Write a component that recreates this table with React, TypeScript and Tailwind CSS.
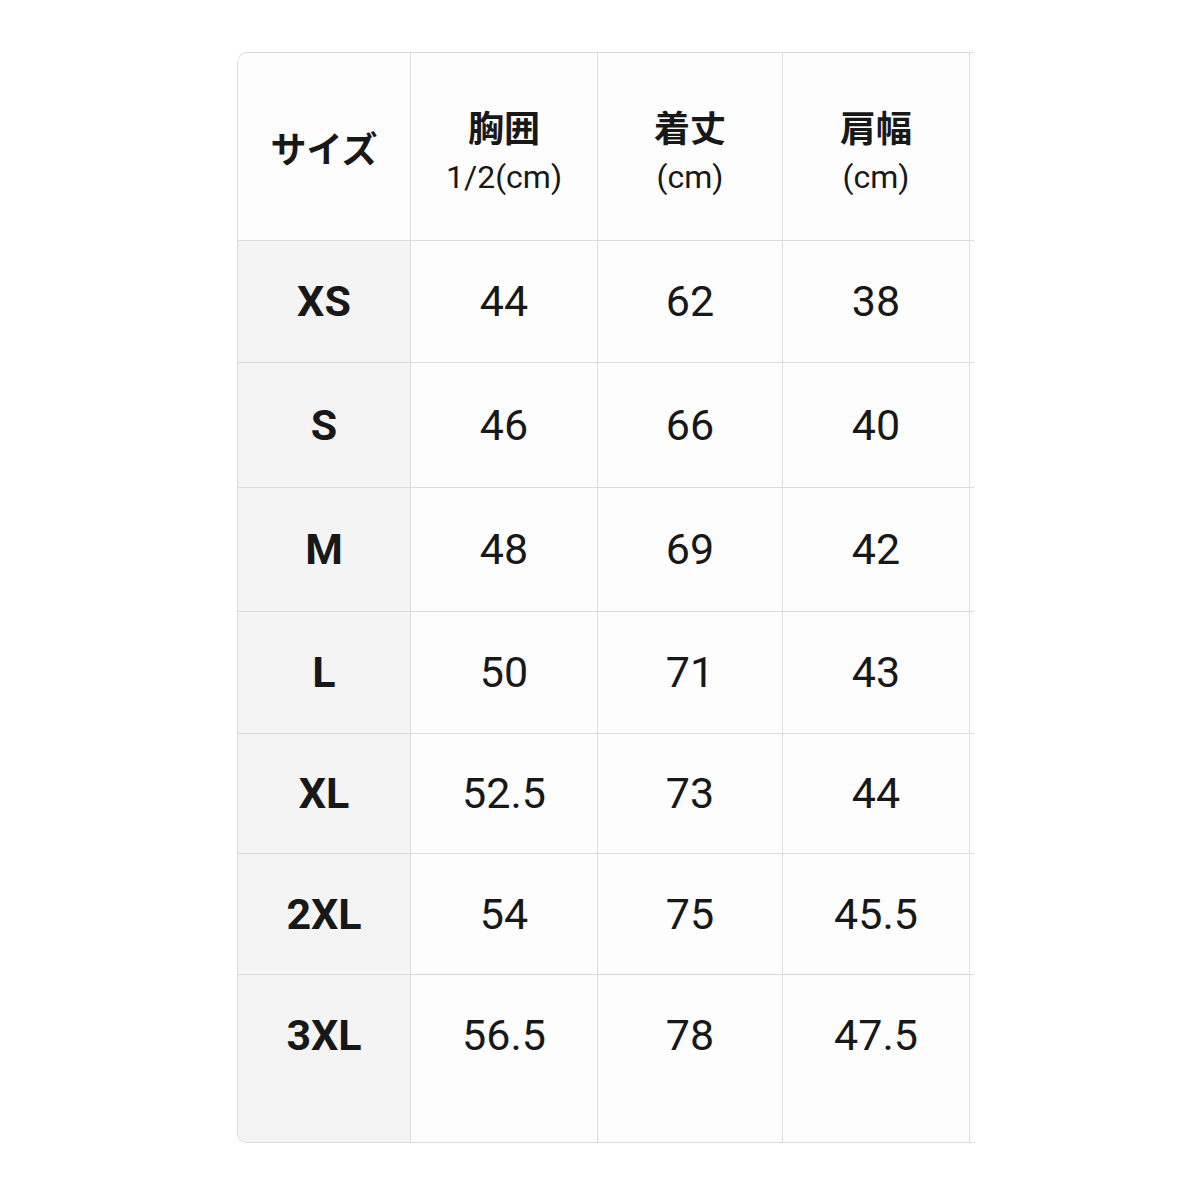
const rows = [
  { size: 'XS', chest: '44', length: '62', shoulder: '38' },
  { size: 'S', chest: '46', length: '66', shoulder: '40' },
  { size: 'M', chest: '48', length: '69', shoulder: '42' },
  { size: 'L', chest: '50', length: '71', shoulder: '43' },
  { size: 'XL', chest: '52.5', length: '73', shoulder: '44' },
  { size: '2XL', chest: '54', length: '75', shoulder: '45.5' },
  { size: '3XL', chest: '56.5', length: '78', shoulder: '47.5' },
]

const heights = ['h-[122px]', 'h-[125px]', 'h-[124px]', 'h-[122px]', 'h-[120px]', 'h-[121px]', 'h-[167px]']

const HeaderCell = ({ title, unit }: { title: string; unit: string }) => (
  <div className="flex flex-col items-center justify-center border-r border-[#dcdcdc] bg-[#fdfdfd] pt-[14px]">
    <span className="text-[36px] font-bold leading-[46px]">{title}</span>
    <span className="text-[32px] leading-[48px]">{unit}</span>
  </div>
)

export default function App() {
  return (
    <div className="min-h-[1200px] bg-white pl-[237px] pt-[52px] text-[#181818] [font-family:Roboto,'Noto_Sans_CJK_JP',sans-serif]">
      <div className="w-[737px] overflow-hidden rounded-l-[10px] border-y border-l border-[#dcdcdc]">
        {/* header */}
        <div className="grid h-[188px] grid-cols-[173px_187px_185px_187px_1fr] border-b border-[#dcdcdc]">
          <div className="flex items-center justify-center border-r border-[#dcdcdc] bg-[#fdfdfd] pt-[8px]">
            <span className="text-[36px] font-bold">サイズ</span>
          </div>
          <HeaderCell title="胸囲" unit="1/2(cm)" />
          <HeaderCell title="着丈" unit="(cm)" />
          <HeaderCell title="肩幅" unit="(cm)" />
          <div className="bg-[#fdfdfd]" />
        </div>

        {rows.map((row, i) => {
          const last = i === rows.length - 1
          const pad = last ? 'pb-[46px]' : ''
          return (
            <div
              key={row.size}
              className={`grid grid-cols-[173px_187px_185px_187px_1fr] ${heights[i]} ${last ? '' : 'border-b border-[#dcdcdc]'}`}
            >
              <div className={`flex items-center justify-center border-r border-[#dcdcdc] bg-[#f4f4f4] text-[43px] font-bold ${pad}`}>
                {row.size}
              </div>
              <div className={`flex items-center justify-center border-r border-[#dcdcdc] bg-[#fdfdfd] text-[43px] ${pad}`}>
                {row.chest}
              </div>
              <div className={`flex items-center justify-center border-r border-[#dcdcdc] bg-[#fdfdfd] text-[43px] ${pad}`}>
                {row.length}
              </div>
              <div className={`flex items-center justify-center border-r border-[#dcdcdc] bg-[#fdfdfd] text-[43px] ${pad}`}>
                {row.shoulder}
              </div>
              <div className="bg-[#fdfdfd]" />
            </div>
          )
        })}
      </div>
    </div>
  )
}
